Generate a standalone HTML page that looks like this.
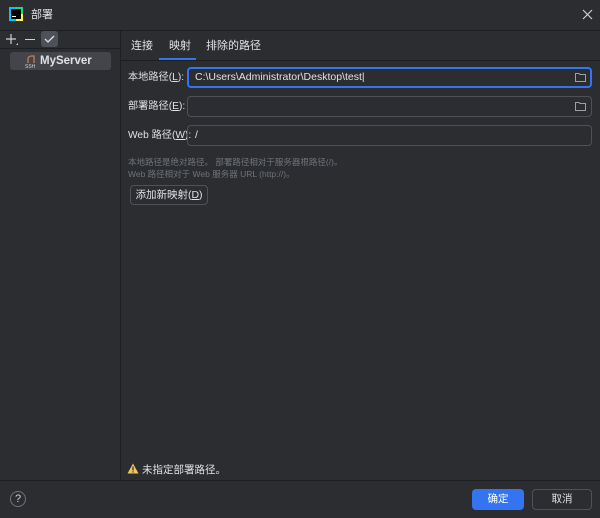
<!DOCTYPE html>
<html><head><meta charset="utf-8"><style>
*{box-sizing:border-box;margin:0;padding:0}
body{width:600px;height:518px;background:#2b2d30;font-family:"Liberation Sans","Noto Sans CJK SC",sans-serif;color:#dfe1e5;font-size:11px;line-height:14px;position:relative;overflow:hidden}
.a{position:absolute;white-space:nowrap}
.inp{position:absolute;left:187px;width:405px;height:21px;border:1px solid #4e5157;border-radius:4px;padding-left:7px;line-height:19px;font-size:10.5px}
.lbl{position:absolute;left:128px;font-size:10.2px;white-space:nowrap}
.fold{position:absolute;right:5px;top:4px}
</style></head><body>
<div class="a" style="left:0;top:30px;width:600px;height:1px;background:#1e1f22"></div>
<div class="a" style="left:120px;top:31px;width:1px;height:449px;background:#1e1f22"></div>
<div class="a" style="left:0;top:48px;width:120px;height:1px;background:#1e1f22"></div>
<div class="a" style="left:121px;top:60px;width:479px;height:1px;background:#1e1f22"></div>
<div class="a" style="left:0;top:480px;width:600px;height:1px;background:#1e1f22"></div>
<svg class="a" style="left:9px;top:7px" width="14" height="14"><rect x="0" y="0" width="14" height="14" fill="#21d789"/><rect x="0" y="0" width="7" height="14" fill="#07c3f2"/><rect x="7" y="7" width="7" height="7" fill="#fcf84a"/><rect x="2" y="2" width="10" height="10" fill="#000"/><rect x="3" y="9" width="4" height="1" fill="#fff"/></svg>
<div class="a" style="left:31px;top:8px">部署</div>
<svg class="a" style="left:582px;top:9px" width="11" height="11"><path d="M1 1L10 10M10 1L1 10" stroke="#ced0d6" stroke-width="1.2"/></svg>
<svg class="a" style="left:5px;top:33px" width="14" height="14"><path d="M6 1V11M1 6H11" stroke="#ced0d6" stroke-width="1.2"/><path d="M11 12h2v-2z" fill="#ced0d6"/></svg>
<div class="a" style="left:25px;top:39px;width:10px;height:1.2px;background:#ced0d6"></div>
<div class="a" style="left:41px;top:31px;width:17px;height:16px;background:#4e5157;border-radius:3px"></div>
<svg class="a" style="left:44px;top:34px" width="11" height="10"><path d="M1 5L4 8L10 2" stroke="#dfe1e5" stroke-width="1.3" fill="none"/></svg>
<div class="a" style="left:10px;top:52px;width:101px;height:18px;background:#43454a;border-radius:3px"></div>
<svg class="a" style="left:25px;top:55px" width="14" height="13"><path d="M3 8V4Q3 1 7 1H9V8" stroke="#c77d55" stroke-width="1.3" fill="none"/><text x="0" y="13" font-size="5" fill="#ced0d6" font-family="Liberation Sans">SSH</text></svg>
<div class="a" style="left:40px;top:54px;font-weight:bold;font-size:11.5px">MyServer</div>
<div class="a" style="left:131px;top:39px">连接</div>
<div class="a" style="left:169px;top:39px">映射</div>
<div class="a" style="left:206px;top:39px">排除的路径</div>
<div class="a" style="left:159px;top:58px;width:37px;height:2px;background:#3574f0"></div>
<div class="lbl" style="top:71px">本地路径(<u>L</u>):</div>
<div class="inp" style="top:67px;border:2px solid #3574f0;padding-left:6px;line-height:17px">C:\Users\Administrator\Desktop\test|<svg class="fold" style="top:3px;right:4px" width="11" height="10"><path d="M0.5 1.5H4L5 2.5H10.5V9.5H0.5Z" stroke="#9da0a8" fill="none"/></svg></div>
<div class="lbl" style="top:100px">部署路径(<u>E</u>):</div>
<div class="inp" style="top:96px"><svg class="fold" width="11" height="10"><path d="M0.5 1.5H4L5 2.5H10.5V9.5H0.5Z" stroke="#9da0a8" fill="none"/></svg></div>
<div class="lbl" style="top:129px">Web 路径(<u>W</u>):</div>
<div class="inp" style="top:125px">/</div>
<div class="a" style="left:128px;top:156px;font-size:8.5px;color:#6f737a;line-height:12px">本地路径是绝对路径。 部署路径相对于服务器根路径(/)。<br>Web 路径相对于 Web 服务器 URL (http://)。</div>
<div class="a" style="left:130px;top:185px;width:78px;height:20px;border:1px solid #4e5157;border-radius:4px;text-align:center;line-height:18px;font-size:10.5px">添加新映射(<u>D</u>)</div>
<svg class="a" style="left:127px;top:463px" width="12" height="11"><path d="M6 0.5L11.5 10.5H0.5Z" fill="#f2c55c"/><rect x="5.4" y="3.5" width="1.2" height="4" fill="#2b2d30"/><rect x="5.4" y="8.3" width="1.2" height="1.2" fill="#2b2d30"/></svg>
<div class="a" style="left:142px;top:463px;font-size:10.5px">未指定部署路径。</div>
<div class="a" style="left:10px;top:491px;width:16px;height:16px;border:1px solid #6f737a;border-radius:50%;text-align:center;line-height:14px;font-size:11px;color:#ced0d6">?</div>
<div class="a" style="left:472px;top:489px;width:52px;height:21px;background:#3574f0;border-radius:4px;text-align:center;line-height:21px;color:#fff;font-size:10.5px">确定</div>
<div class="a" style="left:532px;top:489px;width:60px;height:21px;border:1px solid #4e5157;border-radius:4px;text-align:center;line-height:19px;font-size:10.5px">取消</div>
</body></html>
